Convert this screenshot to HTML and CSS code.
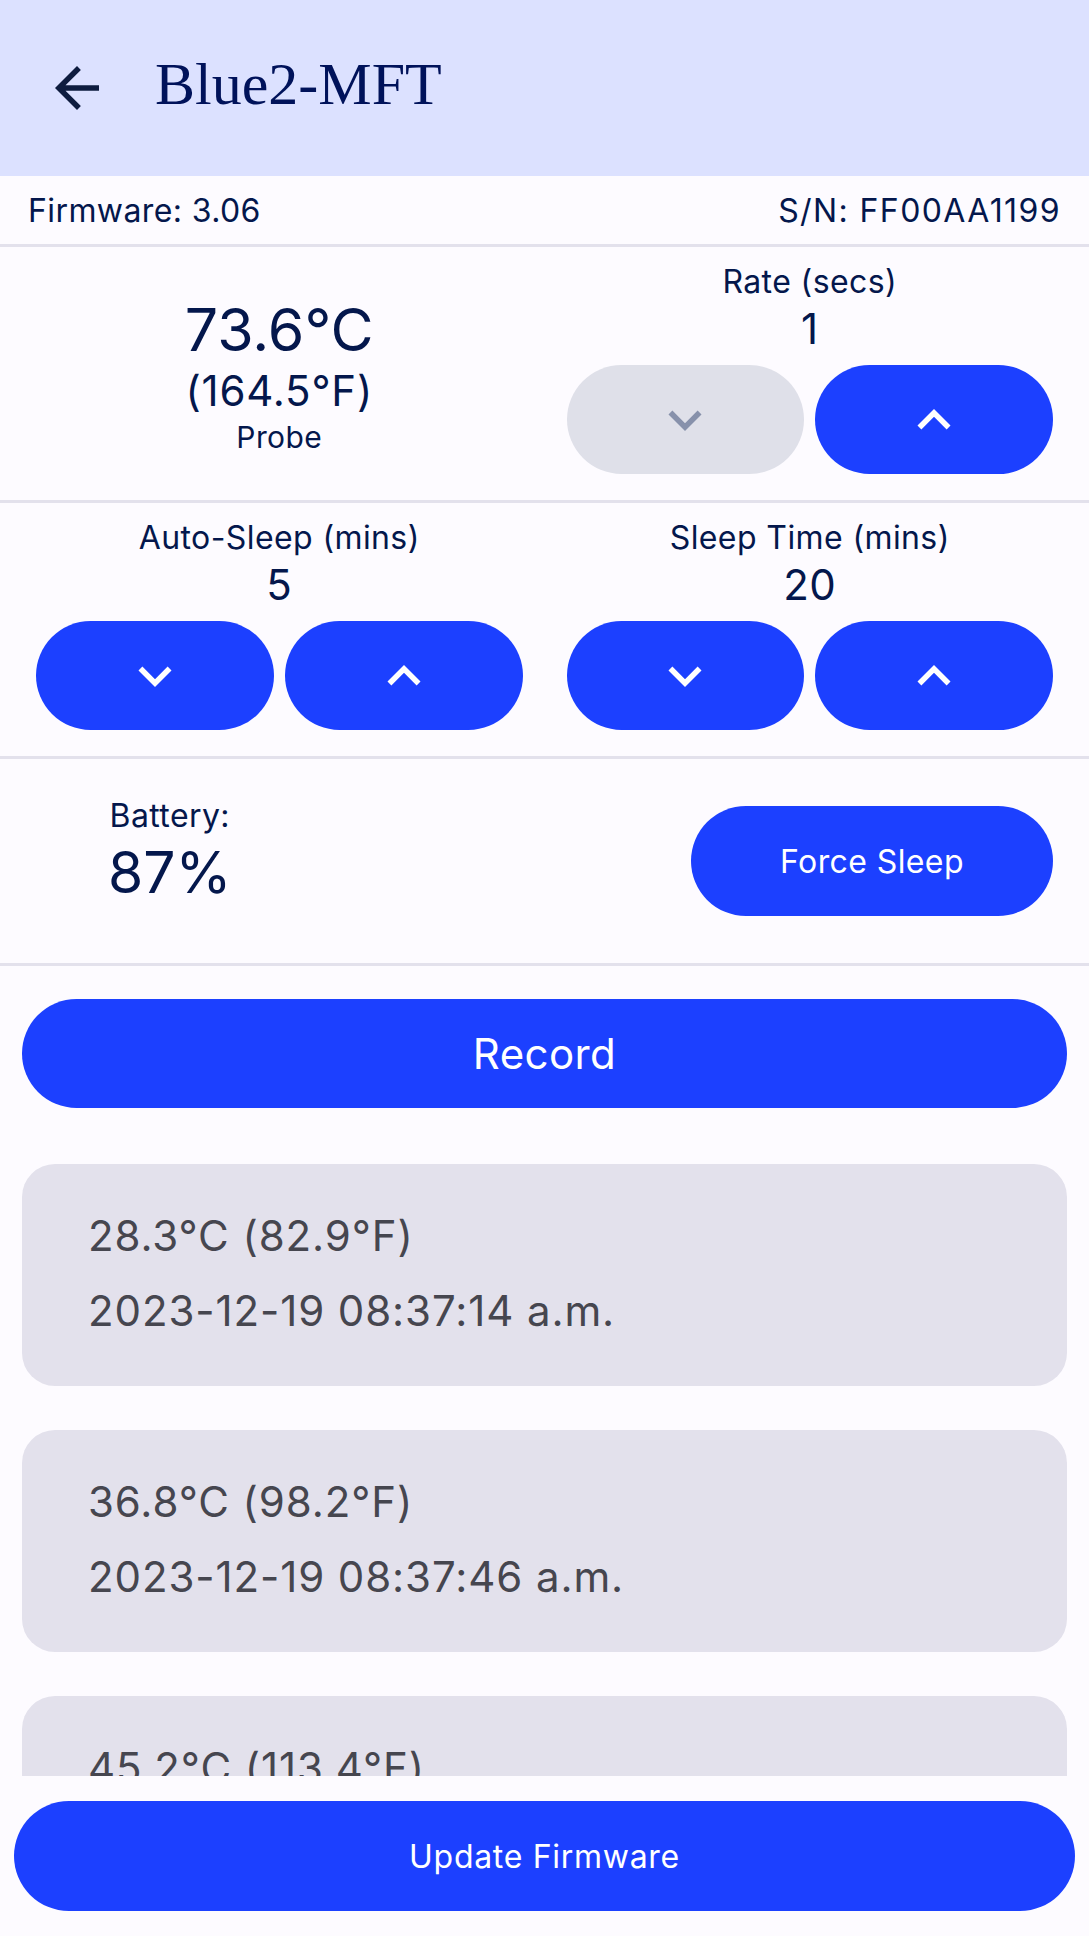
FILE: index.html
```html
<!DOCTYPE html>
<html lang="en">
<head>
<meta charset="utf-8">
<title>Blue2-MFT</title>
<link rel="stylesheet" href="styles.css">
</head>
<body>
  <header class="appbar">
    <svg class="back" viewBox="0 0 24 24" aria-hidden="true"><path d="M20 11H7.83l5.59-5.59L12 4l-8 8 8 8 1.41-1.41L7.83 13H20v-2z"/></svg>
    <h1 class="title">Blue2-MFT</h1>
  </header>

  <main class="content">
    <div class="info">
      <span>Firmware: 3.06</span>
      <span class="serial">S/N: FF00AA1199</span>
    </div>

    <section class="controls">
      <div class="col probe">
        <div class="temp-c">73.6°C</div>
        <div class="temp-f">(164.5°F)</div>
        <div class="temp-label">Probe</div>
      </div>
      <div class="col">
        <div class="label">Rate (secs)</div>
        <div class="value">1</div>
        <div class="steppers">
          <button class="step disabled"><svg viewBox="0 0 24 24"><path d="M16.59 8.59L12 13.17 7.41 8.59 6 10l6 6 6-6z"/></svg></button>
          <button class="step"><svg viewBox="0 0 24 24"><path d="M12 8l-6 6 1.41 1.41L12 10.83l4.59 4.58L18 14z"/></svg></button>
        </div>
      </div>
    </section>

    <section class="controls">
      <div class="col">
        <div class="label">Auto-Sleep (mins)</div>
        <div class="value">5</div>
        <div class="steppers">
          <button class="step"><svg viewBox="0 0 24 24"><path d="M16.59 8.59L12 13.17 7.41 8.59 6 10l6 6 6-6z"/></svg></button>
          <button class="step"><svg viewBox="0 0 24 24"><path d="M12 8l-6 6 1.41 1.41L12 10.83l4.59 4.58L18 14z"/></svg></button>
        </div>
      </div>
      <div class="col">
        <div class="label">Sleep Time (mins)</div>
        <div class="value">20</div>
        <div class="steppers">
          <button class="step"><svg viewBox="0 0 24 24"><path d="M16.59 8.59L12 13.17 7.41 8.59 6 10l6 6 6-6z"/></svg></button>
          <button class="step"><svg viewBox="0 0 24 24"><path d="M12 8l-6 6 1.41 1.41L12 10.83l4.59 4.58L18 14z"/></svg></button>
        </div>
      </div>
    </section>

    <section class="power">
      <div class="battery">
        <div class="battery-label">Battery:</div>
        <div class="battery-value">87%</div>
      </div>
      <button class="pill force">Force Sleep</button>
    </section>

    <section class="records">
      <button class="pill record">Record</button>
      <ul class="log">
        <li class="entry"><div>28.3°C (82.9°F)</div><div>2023-12-19 08:37:14 a.m.</div></li>
        <li class="entry"><div>36.8°C (98.2°F)</div><div>2023-12-19 08:37:46 a.m.</div></li>
        <li class="entry"><div>45.2°C (113.4°F)</div><div>2023-12-19 08:38:18 a.m.</div></li>
      </ul>
    </section>
  </main>

  <footer class="footer">
    <button class="pill update">Update Firmware</button>
  </footer>
</body>
</html>
```
FILE: styles.css
```css
* { box-sizing: border-box; }

html, body { margin: 0; padding: 0; }

body {
  width: 1089px;
  height: 1936px;
  overflow: hidden;
  display: flex;
  flex-direction: column;
  background: #fdfbff;
  color: #04174c;
  font-family: Inter, "Noto Sans", sans-serif;
  letter-spacing: 0.4px;
}

.appbar {
  flex: none;
  height: 176px;
  background: #dce1ff;
  display: flex;
  align-items: center;
  padding-left: 44px;
}

.back {
  width: 66px;
  height: 66px;
  fill: #0e1c3f;
  flex: none;
}

.title {
  margin: 0 0 0 45px;
  padding-bottom: 8px;
  font-family: "Liberation Serif", "Times New Roman", serif;
  font-weight: normal;
  font-size: 60px;
  line-height: 66px;
  letter-spacing: 0;
  color: #00125a;
}

.content {
  flex: 1;
  overflow: hidden;
}

.info {
  height: 71px;
  border-bottom: 3px solid #e3e1ec;
  display: flex;
  align-items: center;
  justify-content: space-between;
  padding: 0 28px;
  font-size: 32px;
}

.serial { letter-spacing: 1.4px; }

.controls {
  display: grid;
  grid-template-columns: 1fr 1fr;
  padding: 15px 14px 26px;
  border-bottom: 3px solid #e3e1ec;
}

.col {
  padding: 0 22px;
  display: flex;
  flex-direction: column;
  align-items: center;
}

.probe {
  justify-content: center;
  text-align: center;
  padding-top: 16px;
}

.temp-c { font-size: 59px; line-height: 70px; letter-spacing: 0; }
.temp-f { font-size: 42px; line-height: 52px; letter-spacing: 0.8px; }
.temp-label { font-size: 30px; line-height: 40px; }

.label { font-size: 32px; line-height: 40px; }
.value { font-size: 42px; line-height: 53px; }

.steppers {
  align-self: stretch;
  display: flex;
  gap: 11px;
  margin-top: 10px;
}

button {
  font-family: inherit;
  letter-spacing: inherit;
  border: 0;
  padding: 0;
  margin: 0;
  cursor: pointer;
}

.step {
  flex: 1;
  height: 109px;
  border-radius: 55px;
  background: #1c40ff;
  display: flex;
  align-items: center;
  justify-content: center;
}

.step svg {
  width: 66px;
  height: 66px;
  fill: #ffffff;
}

.step.disabled { background: #dfe0e9; }
.step.disabled svg { fill: #8791ab; }

.power {
  height: 207px;
  border-bottom: 3px solid #e3e1ec;
  display: flex;
  align-items: flex-start;
  justify-content: space-between;
  padding: 0 36px 0 108px;
}

.battery {
  margin-top: 37px;
  text-align: center;
}

.battery-label { font-size: 32px; line-height: 40px; }
.battery-value { font-size: 57px; line-height: 74px; letter-spacing: 0; }

.pill {
  background: #1c40ff;
  color: #ffffff;
  border-radius: 56px;
}

.force {
  margin-top: 47px;
  width: 362px;
  height: 110px;
  font-size: 32px;
}

.records {
  padding: 33px 22px 0;
}

.record {
  display: block;
  width: 100%;
  height: 109px;
  font-size: 42px;
}

.log {
  list-style: none;
  margin: 56px 0 0;
  padding: 0;
  display: flex;
  flex-direction: column;
  gap: 44px;
}

.entry {
  background: #e3e1ec;
  border-radius: 33px;
  padding: 34px 66px 38px;
  font-size: 42px;
  line-height: 75px;
  letter-spacing: 0.9px;
  color: #46464f;
}

.footer {
  flex: none;
  padding: 25px 14px;
}

.update {
  display: block;
  width: 100%;
  height: 110px;
  font-size: 32px;
  letter-spacing: 0.7px;
}
```
